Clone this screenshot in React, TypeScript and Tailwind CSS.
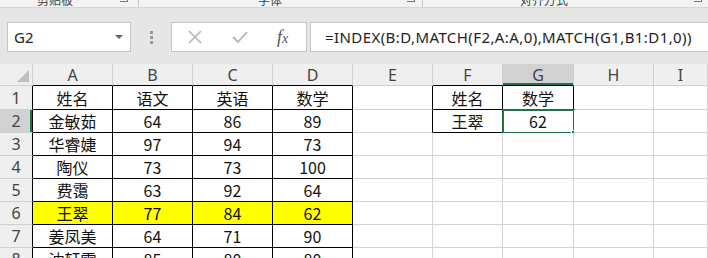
import React from "react"

const cols = ["A", "B", "C", "D", "E", "F", "G", "H", "I"]

const data: string[][] = [
  ["姓名", "语文", "英语", "数学", "", "姓名", "数学", "", ""],
  ["金敏茹", "64", "86", "89", "", "王翠", "62", "", ""],
  ["华睿婕", "97", "94", "73", "", "", "", "", ""],
  ["陶仪", "73", "73", "100", "", "", "", "", ""],
  ["费霭", "63", "92", "64", "", "", "", "", ""],
  ["王翠", "77", "84", "62", "", "", "", "", ""],
  ["姜凤美", "64", "71", "90", "", "", "", "", ""],
  ["沈轩雯", "85", "80", "80", "", "", "", "", ""],
]

const cellFont = { fontFamily: '"Noto Sans CJK SC", "Noto Sans", sans-serif' }

function inTable(r: number, c: number) {
  // r: 0-based data row, c: 0-based col (A=0)
  if (c <= 3) return true
  if ((c === 5 || c === 6) && r <= 1) return true
  return false
}

function Cell({ r, c, text }: { r: number; c: number; text: string }) {
  const boxed = inTable(r, c)
  const rightBlack = boxed || (c === 4 && r <= 1)
  const yellow = r === 5 && c <= 3
  const selected = r === 1 && c === 6
  return (
    <div
      className={[
        "relative flex items-center justify-center border-r border-b text-[16px] leading-none text-[#111]",
        rightBlack ? "border-r-black" : "border-r-[#d4d4d4]",
        boxed ? "border-b-black" : "border-b-[#d4d4d4]",
        yellow ? "bg-[#ffff00]" : "bg-white",
      ].join(" ")}
      style={cellFont}
    >
      {text}
      {selected && (
        <>
          <div className="absolute -left-[1px] -top-[1px] right-[-2px] bottom-[-2px] border-2 border-[#217346]" />
          <div className="absolute right-[-4px] bottom-[-4px] h-[6px] w-[6px] border border-white bg-[#217346]" />
        </>
      )}
    </div>
  )
}

export default function App() {
  return (
    <div className="h-[258px] w-[708px] overflow-hidden bg-[#e6e6e6]" style={{ fontFamily: '"Noto Sans", "Noto Sans CJK SC", sans-serif' }}>
      {/* ribbon group labels, cut off */}
      <div className="relative h-[8px] overflow-hidden border-b border-[#d5d5d5] bg-[#f3f3f3] text-[12px] text-[#444]" style={cellFont}>
        <span className="absolute left-[37px] top-[-9px]">剪贴板</span>
        <span className="absolute left-[120px] top-[-6px] h-[8px] w-[8px] border-r border-b border-[#777]" />
        <div className="absolute left-[138px] top-0 h-[8px] border-l border-[#c8c8c8]" />
        <span className="absolute left-[258px] top-[-9px]">字体</span>
        <span className="absolute left-[407px] top-[-6px] h-[8px] w-[8px] border-r border-b border-[#777]" />
        <div className="absolute left-[422px] top-0 h-[8px] border-l border-[#c8c8c8]" />
        <span className="absolute left-[520px] top-[-9px]">对齐方式</span>
        <span className="absolute left-[694px] top-[-6px] h-[8px] w-[8px] border-r border-b border-[#777]" />
      </div>

      {/* formula bar */}
      <div className="flex h-[56px] items-center pt-[2px]">
        <div className="ml-[7px] flex h-[30px] w-[124px] items-center justify-between border border-[#c6c6c6] bg-white pl-[6px] pr-[7px]">
          <span className="text-[15px] text-[#222]">G2</span>
          <span className="h-0 w-0 border-x-[4px] border-t-[4px] border-x-transparent border-t-[#666]" />
        </div>
        <div className="ml-[18px] flex w-[4px] flex-col items-center gap-[2px]">
          <span className="h-[3px] w-[3px] bg-[#9a9a9a]" />
          <span className="h-[3px] w-[3px] bg-[#9a9a9a]" />
          <span className="h-[3px] w-[3px] bg-[#9a9a9a]" />
        </div>
        <div className="ml-[18px] flex h-[30px] w-[136px] items-center border border-[#c6c6c6] bg-white">
          <svg className="ml-[15px]" width="16" height="16" viewBox="0 0 16 16">
            <path d="M2 2 L14 14 M14 2 L2 14" stroke="#b4b4b4" strokeWidth="1.6" fill="none" />
          </svg>
          <svg className="ml-[28px]" width="18" height="16" viewBox="0 0 18 16">
            <path d="M2 8 L7 13 L16 3" stroke="#b4b4b4" strokeWidth="1.8" fill="none" />
          </svg>
          <span className="ml-[28px] text-[18px] italic text-[#555]" style={{ fontFamily: '"Liberation Serif", serif' }}>
            f<span className="text-[14px]">x</span>
          </span>
        </div>
        <div className="ml-[3px] flex h-[30px] flex-1 items-center border-y border-l border-[#c6c6c6] bg-white pl-[14px]">
          <span className="text-[15px] tracking-[0.42px] text-[#222]">=INDEX(B:D,MATCH(F2,A:A,0),MATCH(G1,B1:D1,0))</span>
        </div>
      </div>

      {/* sheet */}
      <div className="grid grid-cols-[33px_80px_80px_80px_80px_80px_70px_71px_80px_1fr] grid-rows-[22px_24px_23px_23px_23px_23px_23px_23px_23px]">
        <div className="flex items-end justify-end border-r border-b border-[#d0d0d0] bg-[#efefef] p-[3px]">
          <svg width="12" height="12" viewBox="0 0 12 12">
            <path d="M12 0 L12 12 L0 12 Z" fill="#c0c0c0" />
          </svg>
        </div>
        {cols.map((c, i) => (
          <div
            key={c}
            className={[
              "flex items-center justify-center border-r border-b border-[#d0d0d0] text-[16px] text-[#444]",
              c === "G" ? "bg-[#d2d2d2] shadow-[inset_0_-2px_0_#217346]" : "bg-[#efefef]",
              i <= 3 || c === "F" || c === "G" ? "border-b-black" : "",
            ].join(" ")}
          >
            {c}
          </div>
        ))}
        {data.map((row, r) => (
          <React.Fragment key={r}>
            <div
              className={[
                "flex items-center justify-center border-b border-r border-b-[#d0d0d0] border-r-black text-[16px] text-[#444]",
                r === 1 ? "bg-[#d2d2d2] shadow-[inset_-2px_0_0_#217346]" : "bg-[#efefef]",
              ].join(" ")}
            >
              {r + 1}
            </div>
            {row.map((t, c) => (
              <Cell key={c} r={r} c={c} text={t} />
            ))}
          </React.Fragment>
        ))}
      </div>
    </div>
  )
}
